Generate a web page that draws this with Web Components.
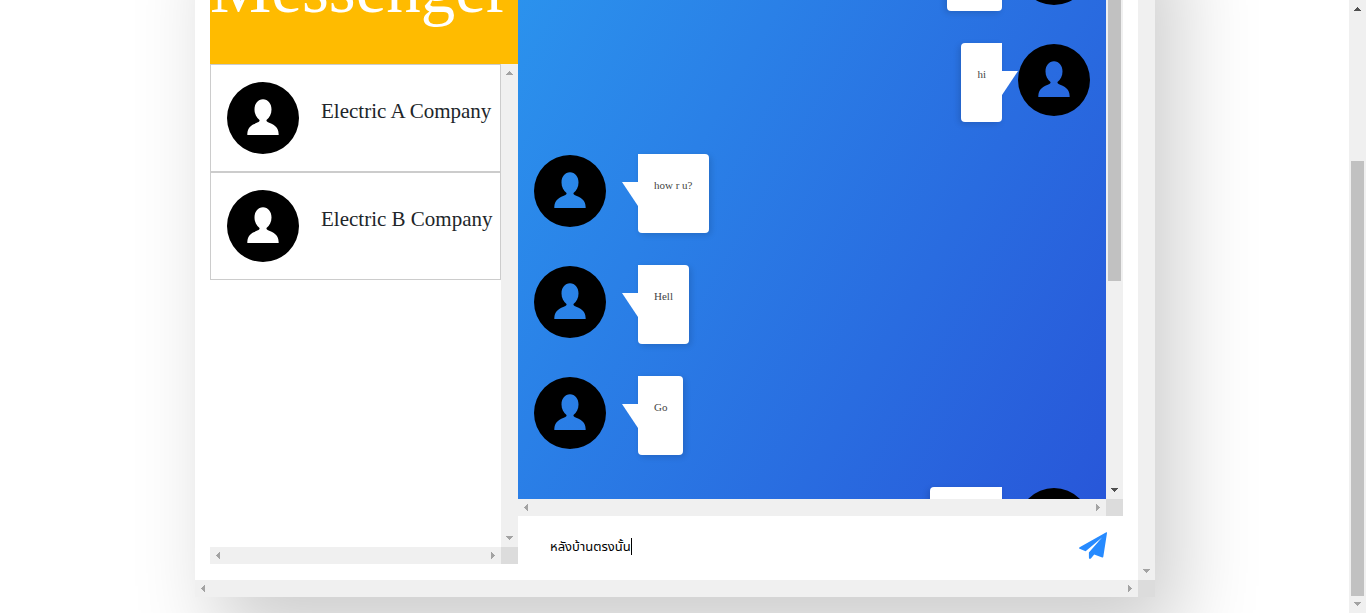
<!DOCTYPE html>
<html lang="en">
<head>
<meta charset="utf-8">
<title>Messenger</title>
<style>
html, body { margin: 0; height: 100%; overflow: hidden; background: #fff; }
body { font-family: "Liberation Serif", serif; }
</style>
</head>
<body>
<messenger-page></messenger-page>
<script>
const define = (name, html) => {
  const template = document.createElement('template');
  template.innerHTML = html;
  customElements.define(name, class extends HTMLElement {
    constructor() {
      super();
      this.attachShadow({ mode: 'open' }).append(template.content.cloneNode(true));
    }
  });
};

/* Classic scroll bar: arrows at both ends, optional thumb. */
define('scroll-bar', `
<style>
:host { display: flex; flex-direction: column; align-items: center; width: 17px; background: #f0f0f0; box-sizing: border-box; }
:host([horizontal]) { flex-direction: row; width: auto; height: 17px; }
svg { display: block; width: 17px; height: 17px; flex: none; fill: currentColor; }
.end { color: var(--end, #a3a3a3); }
.start { color: var(--start, #a3a3a3); }
:host([horizontal]) .across, :host(:not([horizontal])) .down { display: block; }
:host([horizontal]) .down, :host(:not([horizontal])) .across { display: none; }
.before { flex: var(--before, 1) 0 0; }
.thumb { flex: var(--thumb, 0) 0 0; width: 13px; background: #c1c1c1; }
.after { flex: var(--after, 0) 0 0; }
</style>
<svg class="start" viewBox="0 0 17 17" shape-rendering="crispEdges"><path class="down" d="M8 7h1v1h1v1h1v1h1v1H5v-1h1V9h1V8h1z"/><path class="across" d="M6 8h1V7h1V6h1V5h1v7H9v-1H8v-1H7V9H6z"/></svg>
<span class="before"></span><span class="thumb"></span><span class="after"></span>
<svg class="end" viewBox="0 0 17 17" shape-rendering="crispEdges"><path class="down" d="M8 10h1V9h1V8h1V7h1V6H5v1h1v1h1v1h1z"/><path class="across" d="M11 8h-1V7H9V6H8V5H7v7h1v-1h1v-1h1V9h1z"/></svg>
`);

/* A box with its scroll bars at the right and along the bottom. */
define('scroll-frame', `
<style>
:host { display: grid; grid-template: minmax(0, 1fr) 17px / minmax(0, 1fr) 17px; box-sizing: border-box; }
.view { overflow: hidden; }
.corner { background: #dcdcdc; }
</style>
<div class="view"><slot></slot></div>
<scroll-bar></scroll-bar>
<scroll-bar horizontal></scroll-bar>
<span class="corner"></span>
`);

define('user-avatar', `
<style>
:host { display: block; width: 72px; height: 72px; flex: none; }
svg { display: block; width: 100%; height: 100%; }
</style>
<svg viewBox="0 0 72 72" role="img" aria-label="User"><path fill-rule="evenodd" d="M36 0a36 36 0 1 0 0 72a36 36 0 1 0 0-72zM36 17.300c5 0 8.500 4.300 8.500 10.200c0 4.500-2 8.200-5 10.500v1c1 1.500 4 2.200 6.500 3.500c4 2.300 5.700 5.500 5.700 10.500h-31.400c0-5 1.700-8.200 5.700-10.500c2.500-1.300 5.500-2 6.500-3.500v-1c-3-2.300-5-6-5-10.500c0-5.900 3.500-10.200 8.500-10.200z"/></svg>
`);

define('contact-item', `
<style>
:host { display: flex; gap: 22px; padding: 17px 8px 17px 16px; border: 1px solid #ccc; }
h2 { margin: 16px 0 0; font-size: 21px; line-height: 26px; font-weight: 400; white-space: nowrap; color: #212529; }
</style>
<user-avatar></user-avatar><h2><slot></slot></h2>
`);

define('chat-message', `
<style>
:host { display: flex; align-items: flex-start; gap: 32px; }
:host([mine]) { flex-direction: row-reverse; gap: 16px; }
user-avatar { margin-top: 1px; }
.bubble { position: relative; box-sizing: border-box; min-height: 79px; width: var(--width, auto); padding: 24px 16px 40px; background: #fff; color: #444;
  border-radius: 0 4px 4px 4px; box-shadow: 2px 2px 6px rgba(0,0,0,.14); font-size: 11px; line-height: 15px; white-space: nowrap; }
:host([mine]) .bubble { border-radius: 4px 0 4px 4px; box-shadow: -2px 2px 6px rgba(0,0,0,.14); }
.bubble::before { content: ""; position: absolute; top: 28px; right: 100%; width: 16px; height: 24px; background: #fff; clip-path: polygon(0 0, 100% 0, 100% 100%); }
:host([mine]) .bubble::before { right: auto; left: 100%; clip-path: polygon(0 0, 100% 0, 0 100%); }
</style>
<user-avatar></user-avatar><div class="bubble"><slot></slot></div>
`);

define('message-form', `
<style>
:host { display: block; }
form { display: flex; align-items: center; height: 64px; box-sizing: border-box; padding: 0 16px 4px 32px; }
label { flex: 1; display: flex; align-items: center; cursor: text; }
input { field-sizing: content; border: 0; padding: 0; margin: 0; outline: 0; background: none; color: #000; font: 13px/17px "Liberation Sans", "Noto Sans Thai", "Noto Sans", sans-serif; }
.caret { width: 1px; height: 17px; background: #000; }
button { border: 0; padding: 0; margin: 0; background: none; color: #268aff; }
svg { display: block; width: 28px; height: 28px; fill: currentColor; }
</style>
<form>
<label><input type="text" aria-label="Message" value="หลังบ้านตรงนั้น"><span class="caret"></span></label>
<button type="button" aria-label="Send"><svg viewBox="0 0 28 28"><path d="M27.300 0.200Q28.200 0 28 1L24.300 24.800Q24.100 25.700 23.200 25.400L15.200 22.600L11.900 26.500Q10 27.600 9.900 25.500V20.600L23 5.500L6.600 19.200L0.600 16.800Q-0.500 16 0.600 15.200z"/></svg></button>
</form>
`);

define('messenger-card', `
<style>
:host { display: grid; grid-template: 1fr 17px / minmax(0, 1fr) 17px; width: 100%; max-width: 960px; background: #fff; box-shadow: 22px 40px 78px rgba(0,0,0,.2); }
.body { display: grid; grid-template-columns: 308px minmax(0, 1fr); padding: 15px 15px 0; }
h1 { margin: 0; padding: 35px 0 36px; background: #ffbb00; color: #fff; font-size: 69px; line-height: 77px; font-weight: 400; }
.contacts { height: 500px; }
.chat { display: grid; grid-template: minmax(0, 1fr) 17px / minmax(0, 1fr) 17px; height: 600px; }
.log { overflow: hidden; box-sizing: border-box; display: flex; flex-direction: column; gap: 32px; padding: 16px; background: linear-gradient(120deg, #2b95ee, #2857d9); }
.corner { background: #dcdcdc; }
</style>
<div class="body">
  <aside>
    <h1>Messenger</h1>
    <scroll-frame class="contacts">
      <contact-item>Electric A Company</contact-item>
      <contact-item>Electric B Company</contact-item>
    </scroll-frame>
  </aside>
  <main>
    <div class="chat">
      <div class="log">
        <chat-message mine style="--width:55px"></chat-message>
        <chat-message mine>hi</chat-message>
        <chat-message>how r u?</chat-message>
        <chat-message>Hell</chat-message>
        <chat-message>Go</chat-message>
        <chat-message mine style="--width:72px"></chat-message>
      </div>
      <scroll-bar style="--before:0;--thumb:348;--after:201;--end:#505050"></scroll-bar>
      <scroll-bar horizontal></scroll-bar>
      <span class="corner"></span>
    </div>
    <message-form></message-form>
  </main>
</div>
<scroll-bar></scroll-bar>
<scroll-bar horizontal></scroll-bar>
<span class="corner"></span>
`);

define('messenger-page', `
<style>
:host { display: grid; grid-template-columns: minmax(0, 1fr) 17px; height: 100vh; }
.stage { display: flex; flex-direction: column; justify-content: flex-end; align-items: center; overflow: hidden; min-height: 0; padding: 0 0 16px 1px; }
messenger-card { flex: none; }
</style>
<div class="stage"><messenger-card></messenger-card></div>
<scroll-bar style="--before:144;--thumb:435;--after:0;--start:#505050"></scroll-bar>
`);
</script>
</body>
</html>
